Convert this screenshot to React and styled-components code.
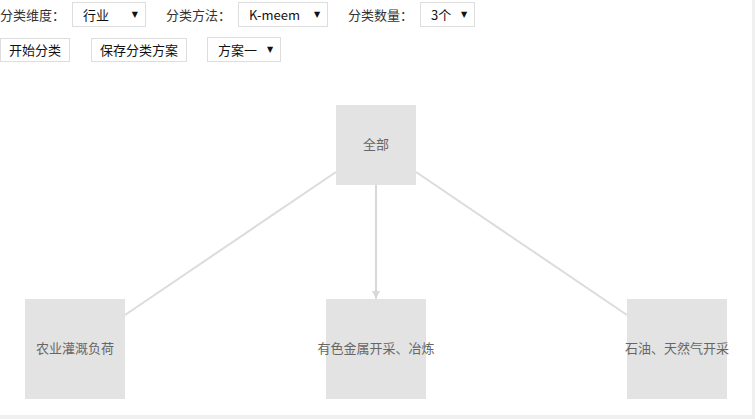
import React from "react";
import styled, { createGlobalStyle } from "styled-components";

const GlobalStyle = createGlobalStyle`
  body {
    margin: 0;
    background: #f0f0f0;
    font-family: "Noto Sans CJK SC", "Noto Sans", sans-serif;
  }
`;

const NODES = [
  { id: "root", label: "全部", x: 336, y: 40, size: 80 },
  { id: "a", label: "农业灌溉负荷", x: 25, y: 234, size: 100 },
  { id: "b", label: "有色金属开采、冶炼", x: 326, y: 234, size: 100 },
  { id: "c", label: "石油、天然气开采", x: 627, y: 234, size: 100 },
];

export default function App() {
  return (
    <>
      <GlobalStyle />
      <Page>
        <Toolbar>
          <Field>
            <Label>分类维度：</Label>
            <Select width={74}>
              行业<Arrow>▼</Arrow>
            </Select>
          </Field>
          <Field>
            <Label>分类方法：</Label>
            <Select width={90}>
              K-meem<Arrow>▼</Arrow>
            </Select>
          </Field>
          <Field>
            <Label>分类数量：</Label>
            <Select width={55}>
              3个<Arrow>▼</Arrow>
            </Select>
          </Field>
        </Toolbar>
        <Toolbar>
          <Button>开始分类</Button>
          <Button>保存分类方案</Button>
          <Select width={74}>
            方案一<Arrow>▼</Arrow>
          </Select>
        </Toolbar>
        <Diagram>
          <Edges width="752" height="350">
            <defs>
              <marker
                id="arrow"
                viewBox="0 0 10 10"
                refX="10"
                refY="5"
                markerWidth="4"
                markerHeight="4"
                orient="auto"
              >
                <path d="M0 0 L10 5 L0 10 Z" fill="#d8d8d8" />
              </marker>
            </defs>
            <line x1="336" y1="107" x2="125" y2="250" stroke="#dcdcdc" strokeWidth="2" />
            <line
              x1="376"
              y1="120"
              x2="376"
              y2="234"
              stroke="#d8d8d8"
              strokeWidth="2"
              markerEnd="url(#arrow)"
            />
            <line x1="416" y1="107" x2="627" y2="250" stroke="#dcdcdc" strokeWidth="2" />
          </Edges>
          {NODES.map((n) => (
            <Node key={n.id} style={{ left: n.x, top: n.y, width: n.size, height: n.size }}>
              <NodeText>{n.label}</NodeText>
            </Node>
          ))}
        </Diagram>
      </Page>
    </>
  );
}

const Page = styled.div`
  width: 752px;
  height: 415px;
  background: #fff;
  overflow: hidden;
`;

const Toolbar = styled.div`
  display: flex;
  align-items: center;
  gap: 20px;
  height: 25px;
  margin-top: 2px;

  & + & {
    margin-top: 10px;
  }
`;

const Field = styled.div`
  display: flex;
  align-items: center;
  gap: 7px;
`;

const Label = styled.span`
  font-size: 13px;
  color: #333;
  white-space: nowrap;
`;

const Select = styled.div`
  box-sizing: border-box;
  width: ${(p) => p.width}px;
  height: 25px;
  border: 1px solid #ddd;
  padding: 0 7px 0 10px;
  display: flex;
  align-items: center;
  justify-content: space-between;
  font-size: 13px;
  color: #111;
  background: #fff;
`;

const Arrow = styled.span`
  font-family: "DejaVu Sans", sans-serif;
  font-size: 8px;
  color: #111;
`;

const Button = styled.button`
  box-sizing: border-box;
  height: 24px;
  padding: 0 8px;
  border: 1px solid #ddd;
  background: #fff;
  font-family: "Noto Sans CJK SC", "Noto Sans", sans-serif;
  font-size: 13px;
  color: #111;
  line-height: 1;
  &:first-child {
    margin-right: 1px;
  }
`;

const Diagram = styled.div`
  position: relative;
  height: 350px;
  margin-top: 3px;
`;

const Edges = styled.svg`
  position: absolute;
  left: 0;
  top: 0;
`;

const Node = styled.div`
  position: absolute;
  background: #e3e3e3;
  display: flex;
  align-items: center;
  justify-content: center;
`;

const NodeText = styled.span`
  font-size: 13px;
  line-height: 1;
  margin-top: -3px;
  color: #666;
  white-space: nowrap;
`;
